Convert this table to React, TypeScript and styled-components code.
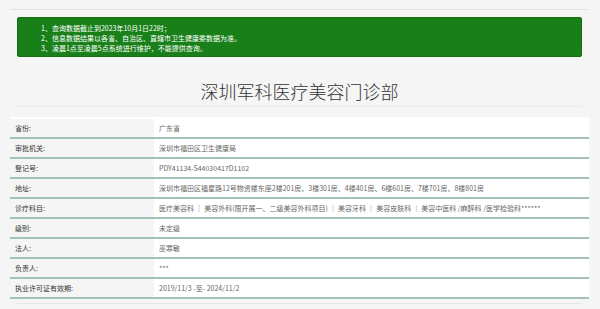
import React from 'react';
import styled, { createGlobalStyle } from 'styled-components';

const GlobalStyle = createGlobalStyle`
  html, body {
    margin: 0;
    padding: 0;
    background: #f5f5f5;
  }
  body {
    font-family: "Noto Sans CJK SC", "Noto Sans", sans-serif;
    color: #333;
  }
`;

interface Row {
  label: string;
  value: string;
}

const rows: Row[] = [
  { label: '省份:', value: '广东省' },
  { label: '审批机关:', value: '深圳市福田区卫生健康局' },
  { label: '登记号:', value: 'PDY41134-S44030417D1102' },
  {
    label: '地址:',
    value: '深圳市福田区福星路12号物资楼东座2楼201房、3楼301房、4楼401房、6楼601房、7楼701房、8楼801房',
  },
  {
    label: '诊疗科目:',
    value:
      '医疗美容科 ｜ 美容外科(限开展一、二级美容外科项目) ｜ 美容牙科 ｜ 美容皮肤科 ｜ 美容中医科 /麻醉科 /医学检验科******',
  },
  { label: '级别:', value: '未定级' },
  { label: '法人:', value: '巫寒敏' },
  { label: '负责人:', value: '***' },
  { label: '执业许可证有效期:', value: '2019/11/3 -至- 2024/11/2' },
];

const notices = [
  '1、查询数据截止到2023年10月1日22时；',
  '2、信息数据结果以各省、自治区、直辖市卫生健康委数据为准。',
  '3、凌晨1点至凌晨5点系统进行维护，不能提供查询。',
];

const Page = styled.div`
  padding: 9px 11px 0 10px;
`;

const TopRule = styled.div`
  height: 1px;
  background: #e2e2e2;
`;

const Notice = styled.ol`
  list-style: none;
  margin: 7px 7px 0 7px;
  padding: 5px 0 4px 23px;
  height: 40px;
  box-sizing: border-box;
  background: #187f19;
  border: 1px solid #147014;
  border-radius: 2px;
  color: #fff;
  font-size: 7px;
  line-height: 10px;
`;

const Title = styled.h1`
  margin: 0;
  padding: 23px 0 0;
  height: 26px;
  text-align: center;
  font-size: 18px;
  font-weight: 300;
  line-height: 22px;
  color: #333;
`;

const Rule = styled.div`
  height: 1px;
  margin: 0 7px;
  background: #ebebeb;
`;

const Table = styled.div`
  margin-top: 10px;
  display: grid;
  grid-template-columns: 144px 1fr;
  background: #fff;
  padding-top: 2px;
`;

const Cell = styled.div<{ $label?: boolean }>`
  height: 18px;
  line-height: 18px;
  padding-left: 5px;
  background: ${p => (p.$label ? '#f5f5f5' : '#fff')};
  border-bottom: 2px solid #a5c3b4;
  font-size: 7px;
  color: ${p => (p.$label ? '#333' : '#666')};
  white-space: nowrap;
  overflow: hidden;
`;

const BottomRule = styled.div`
  margin: 4px 7px 0 7px;
  height: 1px;
  background: #e6e6e6;
`;

export default function App() {
  return (
    <Page>
      <GlobalStyle />
      <TopRule />
      <Notice>
        {notices.map(n => (
          <li key={n}>{n}</li>
        ))}
      </Notice>
      <Title>深圳军科医疗美容门诊部</Title>
      <Rule />
      <Table>
        {rows.map(r => (
          <React.Fragment key={r.label}>
            <Cell $label>{r.label}</Cell>
            <Cell>{r.value}</Cell>
          </React.Fragment>
        ))}
      </Table>
      <BottomRule />
    </Page>
  );
}
